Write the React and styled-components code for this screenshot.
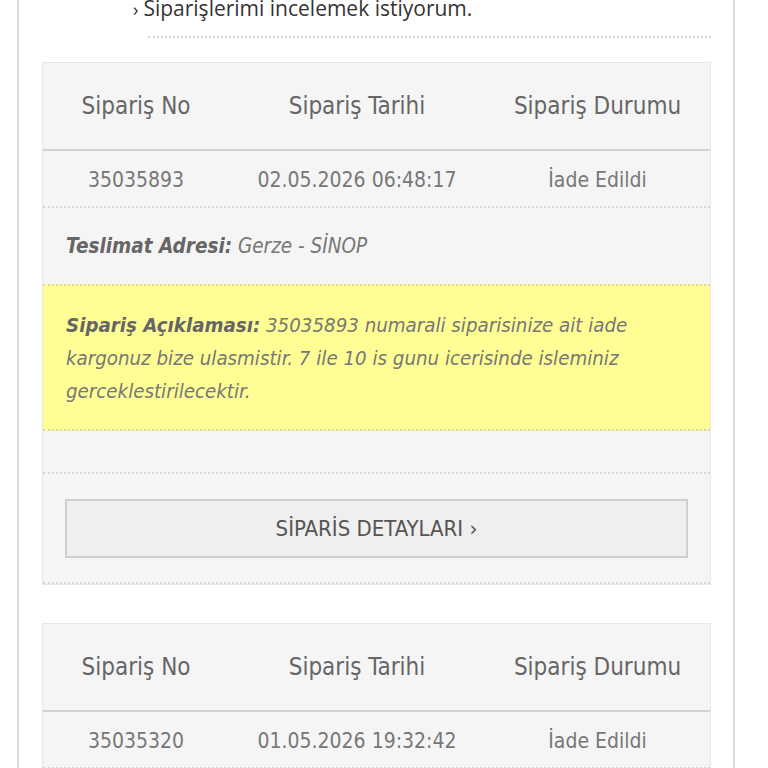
import React from 'react'
import styled, { createGlobalStyle } from 'styled-components'

const Global = createGlobalStyle`
  html, body {
    margin: 0;
    padding: 0;
    background: #fff;
    overflow: hidden;
  }
`;

const FONT = `"DejaVu Sans Condensed", "Liberation Sans Narrow", Roboto, sans-serif`;

const Page = styled.div`
  margin: -7px 33px 0 17px;
  border-left: 2px solid #dcdcdc;
  border-right: 2px solid #dcdcdc;
  padding: 0 22px 40px 23px;
  min-height: 820px;
`;

const Question = styled.div`
  margin-left: 106px;
  font-family: "Open Sans", sans-serif;
  font-size: 21px;
  color: #333;
  line-height: 30px;
  padding-bottom: 12px;
  border-bottom: 2px dotted #d8d8d8;
  text-indent: -15px;
`;

const Arrow = styled.span`
  font-size: 18px;
  margin-right: 5px;
`;

const Card = styled.div`
  margin-top: ${p => p.$top}px;
  background: #f5f5f5;
  border: 1px solid #e8e8e8;
  font-family: ${FONT};
`;

const Cols = styled.div`
  display: grid;
  grid-template-columns: 186px 256px 1fr;
  align-items: center;
  text-align: center;
`;

const Head = styled(Cols)`
  height: 86px;
  border-bottom: 2px solid #d2d2d2;
  color: #666;
  font-size: 24px;
`;

const Row = styled(Cols)`
  height: 53px;
  border-bottom: 2px dotted #d6d6d6;
  color: #777;
  font-size: 21px;
  padding-top: 2px;
`;

const Address = styled.div`
  height: 76px;
  display: flex;
  align-items: center;
  padding-left: 23px;
  font-size: 20.5px;
  font-style: italic;
  color: #777;
`;

const Label = styled.b`
  color: #666;
`;

const Note = styled.div`
  background: #fefe95;
  border-top: 2px dotted #ddd6b0;
  border-bottom: 2px dotted #d6d6c0;
  padding: 23px 23px 21px;
  font-size: 20.3px;
  line-height: 33px;
  font-style: italic;
  color: #777;
`;

const Spacer = styled.div`
  height: 41px;
  border-bottom: 2px dotted #d6d6d6;
`;

const ButtonArea = styled.div`
  padding: 25px 22px 24px;
  border-bottom: 2px dotted #d6d6d6;
`;

const DetailButton = styled.button`
  display: block;
  width: 100%;
  height: 59px;
  background: #efefef;
  border: 2px solid #cfcfcf;
  font-family: ${FONT};
  font-size: 22px;
  color: #555;
  cursor: pointer;
`;

const orders = [
  {
    no: '35035893',
    date: '02.05.2026 06:48:17',
    status: 'İade Edildi',
    address: 'Gerze - SİNOP',
    note: '35035893 numarali siparisinize ait iade kargonuz bize ulasmistir. 7 ile 10 is gunu icerisinde isleminiz gerceklestirilecektir.',
  },
  {
    no: '35035320',
    date: '01.05.2026 19:32:42',
    status: 'İade Edildi',
  },
];

const Order = ({ order, top }) => (
  <Card $top={top}>
    <Head>
      <div>Sipariş No</div>
      <div>Sipariş Tarihi</div>
      <div>Sipariş Durumu</div>
    </Head>
    <Row>
      <div>{order.no}</div>
      <div>{order.date}</div>
      <div>{order.status}</div>
    </Row>
    {order.address && (
      <>
        <Address>
          <Label>Teslimat Adresi:</Label>&nbsp;{order.address}
        </Address>
        <Note>
          <Label>Sipariş Açıklaması:</Label> {order.note}
        </Note>
        <Spacer />
        <ButtonArea>
          <DetailButton>SİPARİS DETAYLARI ›</DetailButton>
        </ButtonArea>
      </>
    )}
  </Card>
);

export default function App() {
  return (
    <>
      <Global />
      <Page>
        <Question>
          <Arrow>›</Arrow>Siparişlerimi incelemek istiyorum.
        </Question>
        <Order order={orders[0]} top={24} />
        <Order order={orders[1]} top={38} />
      </Page>
    </>
  );
}
